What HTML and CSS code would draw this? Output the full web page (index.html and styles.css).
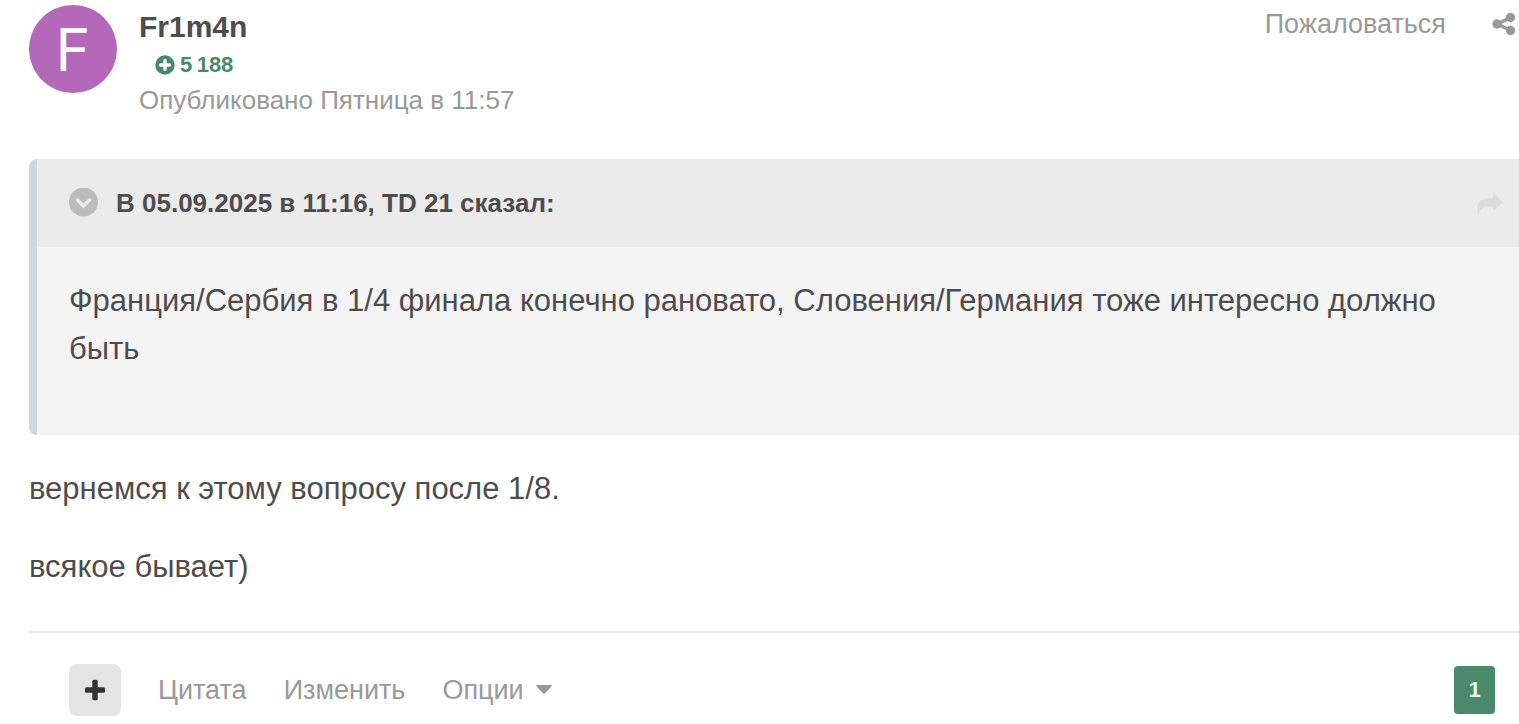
FILE: index.html
```html
<!DOCTYPE html>
<html lang="ru">
<head>
    <meta charset="UTF-8">
    <title>Fr1m4n</title>
    <meta name="viewport" content="width=device-width, initial-scale=1.0">
    <link rel="stylesheet" href="styles.css">
</head>
<body>
    <article class="post">
        <header class="post-header">
            <a class="avatar" href="#">F</a>
            <div class="author">
                <h3><a href="#">Fr1m4n</a></h3>
                <div class="reputation">
                    <svg viewBox="0 0 20 20" width="20" height="20" aria-hidden="true">
                        <circle cx="10" cy="10" r="9.7" fill="currentColor"/>
                        <path d="M10 5.5v9M5.5 10h9" stroke="#fff" stroke-width="3.4" stroke-linecap="round"/>
                    </svg>
                    <span>5&#8201;188</span>
                </div>
                <a class="posted" href="#">Опубликовано Пятница в 11:57</a>
            </div>
            <div class="post-tools">
                <a href="#">Пожаловаться</a>
                <a class="share" href="#" aria-label="Поделиться">
                    <svg viewBox="0 0 24 24" width="24" height="24" aria-hidden="true">
                        <path d="M18.5 5.5L5.5 12l13 6.5" fill="none" stroke="currentColor" stroke-width="3.4"/>
                        <circle cx="18.5" cy="5.5" r="4.7" fill="currentColor"/>
                        <circle cx="5" cy="12" r="4.7" fill="currentColor"/>
                        <circle cx="18.5" cy="18.5" r="4.7" fill="currentColor"/>
                    </svg>
                </a>
            </div>
        </header>

        <div class="post-body">
            <blockquote class="quote">
                <div class="quote-header">
                    <button class="quote-toggle" type="button" aria-label="Свернуть">
                        <svg viewBox="0 0 30 30" width="30" height="30" aria-hidden="true">
                            <circle cx="14.5" cy="14" r="14.5" fill="#bcbcbc"/>
                            <path d="M8.5 12l6 6 6-6" fill="none" stroke="#ebebeb" stroke-width="3.5" stroke-linecap="round"/>
                        </svg>
                    </button>
                    <cite>В 05.09.2025 в 11:16, TD 21 сказал:</cite>
                    <a class="quote-link" href="#" aria-label="К сообщению">
                        <svg viewBox="0 0 26 24" width="26" height="24" aria-hidden="true">
                            <path d="M16 1.5v5.500C6 7 0 10 0 17c0 3 .5 5 1.500 7h1C2 18 6 15.500 16 15.500v5L26 11z" fill="currentColor"/>
                        </svg>
                    </a>
                </div>
                <div class="quote-body">
                    <p>Франция/Сербия в 1/4 финала конечно рановато, Словения/Германия тоже интересно должно быть</p>
                </div>
            </blockquote>
            <p>вернемся к этому вопросу после 1/8.</p>
            <p>всякое бывает)</p>
        </div>

        <footer class="post-footer">
            <button class="multiquote" type="button" aria-label="Мультицитата">
                <svg viewBox="0 0 20 22" width="20" height="22" aria-hidden="true">
                    <rect x="7.3" y="0.7" width="5.4" height="20.6" rx="1.5" fill="currentColor"/>
                    <rect x="0" y="8.3" width="20" height="5.4" rx="1.5" fill="currentColor"/>
                </svg>
            </button>
            <a href="#">Цитата</a>
            <a href="#">Изменить</a>
            <button class="options" type="button">
                Опции
                <svg viewBox="0 0 16 10" width="16" height="10" aria-hidden="true">
                    <path d="M1 0h14q1.5 0 .5 1.2L9 8.5q-1 .8-2 0L.5 1.2Q-.5 0 1 0z" fill="currentColor"/>
                </svg>
            </button>
            <button class="likes" type="button">1</button>
        </footer>
    </article>
</body>
</html>
```
FILE: styles.css
```css
* {
    box-sizing: border-box;
}
body {
    margin: 0;
    background: #fff;
    color: #4d4d4d;
    font-family: "Liberation Sans", Arial, sans-serif;
    font-size: 31px;
    line-height: 48px;
}
a {
    color: inherit;
    text-decoration: none;
}
button {
    border: none;
    padding: 0;
    background: none;
    color: inherit;
    font: inherit;
    cursor: pointer;
}
svg {
    display: block;
}
h3, p, blockquote {
    margin: 0;
}
.post {
    padding: 5px 0 8px 29px;
}
.post-header {
    display: flex;
    align-items: flex-start;
    gap: 22px;
    color: #999;
    font-size: 26px;
    line-height: 40px;
}
.avatar {
    width: 88px;
    height: 88px;
    border-radius: 50%;
    background: #b568b9;
    color: #fff;
    font-family: Inter, sans-serif;
    font-size: 59px;
    line-height: 90px;
    text-align: center;
}
.author {
    flex: 1;
}
.author h3 {
    color: #4d4d4d;
    font-size: 30px;
    line-height: 44px;
}
.reputation {
    display: flex;
    align-items: center;
    gap: 5px;
    padding-left: 16px;
    color: #468a69;
    font-size: 22px;
    font-weight: bold;
    line-height: 32px;
}
.posted {
    display: block;
    line-height: 38px;
}
.post-tools {
    display: flex;
    align-items: center;
    gap: 46px;
    padding-right: 3px;
    font-size: 27px;
    line-height: 38px;
}
.post-body {
    display: flex;
    flex-direction: column;
    gap: 30px;
    margin-top: 40px;
    padding-bottom: 40px;
    border-bottom: 2px solid #ededed;
}
.quote {
    border-left: 8px solid #d5d5dc;
    border-radius: 8px 0 0 8px;
    background: #f4f4f4;
}
.quote-header {
    display: flex;
    align-items: center;
    height: 88px;
    padding: 0 16px 0 32px;
    background: #ebebeb;
    font-size: 26px;
}
.quote-header cite {
    flex: 1;
    margin-left: 17px;
    font-style: normal;
    font-weight: bold;
}
.quote-link {
    color: #dcdcdc;
}
.quote-body {
    padding: 30px 64px 62px 32px;
}
.post-footer {
    display: flex;
    align-items: center;
    gap: 37px;
    padding: 31px 24px 0 40px;
    color: #999;
    font-size: 27px;
}
.multiquote {
    display: grid;
    place-items: center;
    width: 52px;
    height: 52px;
    border-radius: 8px;
    background: #e4e4e4;
    color: #333;
}
.options {
    display: flex;
    align-items: center;
    gap: 12px;
}
.likes {
    width: 41px;
    height: 48px;
    margin-left: auto;
    border-radius: 4px;
    background: #488a69;
    color: #eafff4;
    font-size: 22px;
    font-weight: bold;
}
```
